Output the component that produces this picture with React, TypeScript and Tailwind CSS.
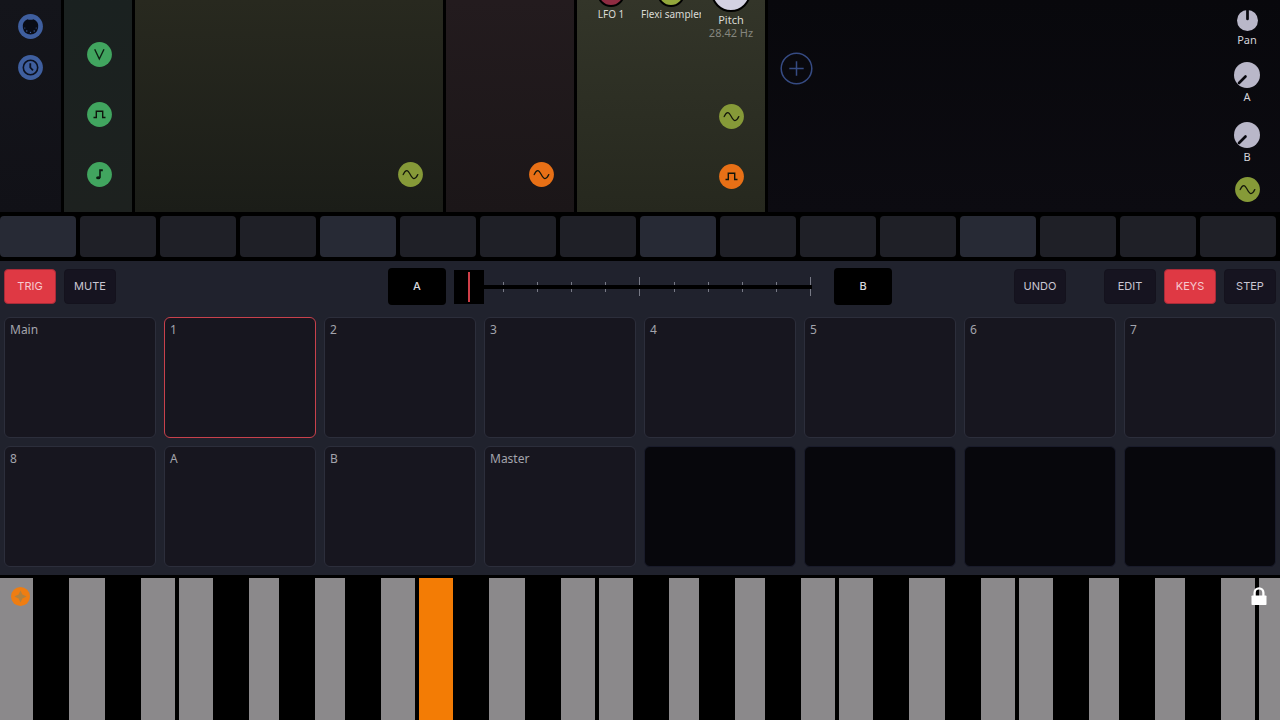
import React, { useState } from 'react';
import clsx from 'clsx';

type PortIcon = 'midi' | 'clock' | 'volt' | 'gate' | 'note' | 'sine';

const portNames: Record<PortIcon, string> = {
  midi: 'MIDI in',
  clock: 'Clock',
  volt: 'Pitch CV',
  gate: 'Gate',
  note: 'Note',
  sine: 'Audio',
};

const PortGlyph: React.FC<{ icon: PortIcon }> = ({ icon }) => {
  switch (icon) {
    case 'midi':
      return (
        <g>
          <path
            d="M9.5 5.2 A8 8 0 0 0 12.5 20.5 A8 8 0 0 0 15.5 5.2 L14.2 5.8 H10.8 Z"
            fill="#090c16"
          />
          <g fill="#41609f">
            <circle cx="6.8" cy="14" r="0.6" />
            <circle cx="8.8" cy="17" r="0.7" />
            <circle cx="12.5" cy="18.4" r="0.7" />
            <circle cx="16.2" cy="17" r="0.7" />
            <circle cx="18.2" cy="14" r="0.6" />
          </g>
        </g>
      );
    case 'clock':
      return (
        <g fill="none" stroke="#0b1020">
          <circle cx="12.5" cy="12.5" r="7.2" strokeWidth="1.6" />
          <path d="M12.3 8.3 V12.5 L15 15.4" strokeWidth="1.8" />
        </g>
      );
    case 'volt':
      return <path d="M7.7 7.3 L12.3 17 L17 7.3" fill="none" stroke="#0d2113" strokeWidth="1.4" />;
    case 'gate':
      return (
        <path d="M6.5 15.5 H9.3 V9.3 H15.7 V15.5 H18.5" fill="none" stroke="#10150c" strokeWidth="1.4" />
      );
    case 'note':
      return (
        <g fill="#0b1c11">
          <ellipse cx="11.3" cy="15.8" rx="2.2" ry="1.5" />
          <path d="M12.2 7.3 H15.8 V9.2 H13.8 V15.8 H12.2 Z" />
        </g>
      );
    case 'sine':
      return (
        <path
          d="M5.2 12.6 C6.6 9.4 7.6 8.6 8.8 8.6 C11.6 8.6 13 16.6 16 16.6 C17.6 16.6 18.8 14.8 19.8 12.6"
          fill="none"
          stroke="#14170b"
          strokeWidth="1.3"
          strokeLinecap="round"
        />
      );
  }
};

interface PortProps {
  icon: PortIcon;
  color: string;
}

const Port: React.FC<PortProps> = ({ icon, color }) => (
  <button aria-label={portNames[icon]} className={clsx('block size-[25px] shrink-0', color)}>
    <svg viewBox="0 0 25 25" className="size-full">
      <circle cx="12.5" cy="12.5" r="12.4" fill="currentColor" />
      <PortGlyph icon={icon} />
    </svg>
  </button>
);

const blue = 'text-[#3f5f9f]';
const green = 'text-[#41a55f]';
const olive = 'text-[#869a38]';
const orange = 'text-[#e87016]';

const Knob: React.FC<{ label: string; small?: boolean }> = ({ label, small }) => (
  <div className="flex flex-col items-center gap-0.5">
    <button aria-label={label} className={clsx('block rounded-full', small ? 'size-[21px]' : 'size-[26px]')}>
      <svg viewBox="0 0 26 26" className="size-full">
        <circle cx="13" cy="13" r="13" fill="#b9b7c9" />
        <path
          d={small ? 'M13 0 V11' : 'M11.5 14.5 L5 21'}
          stroke="#0a0a10"
          strokeWidth={small ? 3.4 : 2.6}
          strokeLinecap="round"
        />
      </svg>
    </button>
    <span className="text-[11px] leading-[14px] text-[#d4d4da]">{label}</span>
  </div>
);

const steps = Array.from({ length: 16 }, (_, i) => i);

const pads = ['Main', '1', '2', '3', '4', '5', '6', '7', '8', 'A', 'B', 'Master', '', '', '', ''];

// one octave; "gap" is the slit between two neighbouring white keys
const octave = [
  { note: 'C', size: 'grow-[34]' },
  { note: 'C#', size: 'grow-[36]' },
  { note: 'D', size: 'grow-[36]' },
  { note: 'D#', size: 'grow-[36]' },
  { note: 'E', size: 'grow-[34]' },
  { note: 'gap', size: 'grow-[4]' },
  { note: 'F', size: 'grow-[34]' },
  { note: 'F#', size: 'grow-[36]' },
  { note: 'G', size: 'grow-[30]' },
  { note: 'G#', size: 'grow-[36]' },
  { note: 'A', size: 'grow-[30]' },
  { note: 'A#', size: 'grow-[36]' },
  { note: 'B', size: 'grow-[34]' },
  { note: 'gap', size: 'grow-[4]' },
];

const pianoKeys = [
  ...[0, 1, 2].flatMap((oct) => octave.map((key) => ({ ...key, oct }))),
  { note: 'C', size: 'grow-[21]', oct: 3 },
];
pianoKeys[0].size = 'grow-[33]';

interface ToolButtonProps {
  label: string;
  active?: boolean;
  className?: string;
  onClick?: () => void;
}

const ToolButton: React.FC<ToolButtonProps> = ({ label, active, className, onClick }) => (
  <button
    onClick={onClick}
    aria-pressed={active}
    className={clsx(
      'h-[35px] w-[52px] rounded border font-[Inter,sans-serif] text-[11px]',
      active ? 'border-[#a82b38] bg-[#df3944] text-[#f6c9d0]' : 'border-[#14121d] bg-[#161420] text-[#c9c6d2]',
      className,
    )}
  >
    {label}
  </button>
);

const Modules: React.FC = () => (
  <section className="grid h-[212px] grid-cols-[61px_68px_308fr_128fr_188px_512fr] gap-[3px] overflow-hidden">
    <div className="flex flex-col items-center gap-4 bg-linear-to-b from-[#14151b] to-[#111117] pt-3.5">
      <Port icon="midi" color={blue} />
      <Port icon="clock" color={blue} />
    </div>
    <div className="flex flex-col items-end justify-end gap-[35px] bg-linear-to-b from-[#1a2120] to-[#1d211f] pr-5 pb-[25px]">
      <Port icon="volt" color={green} />
      <Port icon="gate" color={green} />
      <Port icon="note" color={green} />
    </div>
    <div className="flex items-end justify-end bg-linear-to-b from-[#28291f] to-[#1b1d18] pr-5 pb-[25px]">
      <Port icon="sine" color={olive} />
    </div>
    <div className="flex items-end justify-end bg-linear-to-b from-[#231b1e] to-[#1b1618] pr-5 pb-[25px]">
      <Port icon="sine" color={orange} />
    </div>
    <div className="flex flex-col items-end justify-between bg-linear-to-b from-[#333529] to-[#26281e] pr-1 pb-[23px]">
      <div className="flex h-[39px] items-end leading-[14px] text-[#dadbd6]">
        <div className="flex h-full w-[60px] flex-col items-center justify-end pb-[18px] text-[10px]">
          <span className="size-7 shrink-0 rounded-full border-2 border-black bg-[#8f2c42]" />
          <span>LFO 1</span>
        </div>
        <div className="flex h-full w-[60px] flex-col items-center justify-end pb-[18px] text-[10px]">
          <span className="size-7 shrink-0 rounded-full border-2 border-black bg-[#93a83c]" />
          <span className="w-full shrink-0 overflow-hidden whitespace-nowrap">Flexi sampler</span>
        </div>
        <div className="flex h-full w-[60px] flex-col items-center justify-end text-[11px]">
          <span className="mb-px size-10 shrink-0 rounded-full border-2 border-black bg-[#d3d1e2]" />
          <span className="leading-[13px]">Pitch</span>
          <span className="leading-[13px] text-[#85867e]">28.42 Hz</span>
        </div>
      </div>
      <div className="flex w-[60px] flex-col items-center gap-[35px]">
        <Port icon="sine" color={olive} />
        <Port icon="gate" color={orange} />
      </div>
    </div>
    <div className="flex justify-between bg-linear-to-b from-[#08080c] to-[#0c0b11]">
      <button aria-label="Add module" className="mt-[52px] ml-3 size-[33px] text-[#364b83]">
        <svg viewBox="0 0 33 33" className="size-full" fill="none" stroke="currentColor" strokeWidth="1.5">
          <circle cx="16.5" cy="16.5" r="15.3" />
          <path d="M16.5 9.3 V23.7 M9.3 16.5 H23.7" />
        </svg>
      </button>
      <div className="mr-5 flex flex-col items-center justify-end pb-2.5">
        <Knob label="Pan" small />
        <div className="mt-[15px] mb-[13px] flex flex-col gap-[18px]">
          <Knob label="A" />
          <Knob label="B" />
        </div>
        <Port icon="sine" color={olive} />
      </div>
    </div>
  </section>
);

const Crossfader: React.FC = () => {
  const [fade, setFade] = useState(0);

  return (
    <div className="relative h-[35px] w-[372px]">
      <div className="flex h-full items-center justify-between px-[15px]">
        {Array.from({ length: 11 }, (_, i) => (
          <span key={i} className={clsx('w-px bg-[#777985]', i % 5 === 0 ? 'h-[19px]' : 'h-[10px]')} />
        ))}
      </div>
      <input
        type="range"
        aria-label="Crossfade between A and B"
        min={0}
        max={100}
        value={fade}
        onChange={(e) => setFade(Number(e.target.value))}
        className="absolute inset-0 m-0 h-full w-full appearance-none bg-[linear-gradient(#000,#000)] bg-[length:358px_4px] bg-[position:0_50%] bg-no-repeat [&::-webkit-slider-thumb]:h-[34px] [&::-webkit-slider-thumb]:w-[30px] [&::-webkit-slider-thumb]:appearance-none [&::-webkit-slider-thumb]:border-y-2 [&::-webkit-slider-thumb]:border-black [&::-webkit-slider-thumb]:bg-[linear-gradient(90deg,#000_14px,#cf3f48_14px,#cf3f48_16px,#000_16px)]"
      />
    </div>
  );
};

const Toolbar: React.FC = () => {
  const [padMode, setPadMode] = useState('TRIG');
  const [view, setView] = useState('KEYS');

  const sceneButton = 'h-[37px] w-[58px] rounded bg-black font-[Inter,sans-serif] text-[11px] font-medium text-[#d8d8dc]';

  return (
    <div className="grid h-[51px] grid-cols-[1fr_auto_1fr] items-center px-1">
      <div className="flex gap-2">
        {['TRIG', 'MUTE'].map((mode) => (
          <ToolButton key={mode} label={mode} active={padMode === mode} onClick={() => setPadMode(mode)} />
        ))}
      </div>
      <div className="flex items-center gap-2">
        <button className={sceneButton}>A</button>
        <Crossfader />
        <button className={sceneButton}>B</button>
      </div>
      <div className="flex justify-end gap-2">
        <ToolButton label="UNDO" className="mr-[30px]" />
        {['EDIT', 'KEYS', 'STEP'].map((name) => (
          <ToolButton
            key={name}
            label={name}
            active={view === name}
            onClick={() => setView(name)}
            className={name === 'STEP' ? 'border-[#08080f]' : undefined}
          />
        ))}
      </div>
    </div>
  );
};

const Piano: React.FC = () => (
  <section className="relative flex min-h-[142px] flex-1 bg-black">
    {pianoKeys.map(({ note, size, oct }, index) => {
      if (note === 'gap') return <span key={index} className={clsx('basis-0', size)} />;

      return (
        <button
          key={index}
          aria-label={`${note}${oct + 1}`}
          className={clsx(
            'basis-0',
            size,
            note.includes('#') ? 'bg-black' : note === 'C' && oct === 1 ? 'bg-[#f37c05]' : 'bg-[#8b898b]',
          )}
        />
      );
    })}
    <button aria-label="Keyboard octave" className="absolute top-[9px] left-[11px] size-[19px]">
      <svg viewBox="0 0 20 20" className="size-full">
        <circle cx="10" cy="10" r="10" fill="#ee7d12" />
        <path d="M10 3.6 L12 8 L16.4 10 L12 12 L10 16.4 L8 12 L3.6 10 L8 8 Z" fill="#b0813f" />
      </svg>
    </button>
    <button aria-label="Lock keyboard" className="absolute top-[9px] right-[13px] h-[18px] w-4">
      <svg viewBox="0 0 16 18" className="size-full">
        <path d="M3.6 9 V5.8 A4.4 4.5 0 0 1 12.4 5.8 V9" fill="none" stroke="#fff" strokeWidth="2.3" />
        <rect x="0.5" y="8.4" width="15" height="9.6" rx="0.8" fill="#fff" />
      </svg>
    </button>
  </section>
);

const App: React.FC = () => {
  const [selectedPad, setSelectedPad] = useState('1');

  return (
    <main className="flex min-h-screen flex-col bg-black font-['Noto_Sans',sans-serif]">
      <Modules />

      {/* Step strip, every fourth step is lighter */}
      <section className="grid grid-cols-16 gap-1 py-1 pr-1">
        {steps.map((step) => (
          <button
            key={step}
            aria-label={`Step ${step + 1}`}
            className={clsx('h-[41px] rounded', step % 4 === 0 ? 'bg-[#272a35]' : 'bg-[#1f2027]')}
          />
        ))}
      </section>

      <section className="mb-[3px] bg-[#20222d] pb-2">
        <Toolbar />
        <div className="grid grid-cols-8 gap-2 px-1 pt-[5px]">
          {pads.map((pad, index) => (
            <button
              key={index}
              aria-label={pad || 'Empty pad'}
              disabled={!pad}
              onClick={() => setSelectedPad(pad)}
              className={clsx(
                'flex h-[121px] rounded-md border px-[5px] pt-1 text-left text-xs leading-4 text-[#a3a4ac]',
                !pad && 'border-[#191b2a] bg-[#07070c]',
                pad && (pad === selectedPad ? 'border-[#c8414c] bg-[#17161f]' : 'border-[#2c2e3b] bg-[#17161f]'),
              )}
            >
              {pad}
            </button>
          ))}
        </div>
      </section>

      <Piano />
    </main>
  );
};

export default App;
